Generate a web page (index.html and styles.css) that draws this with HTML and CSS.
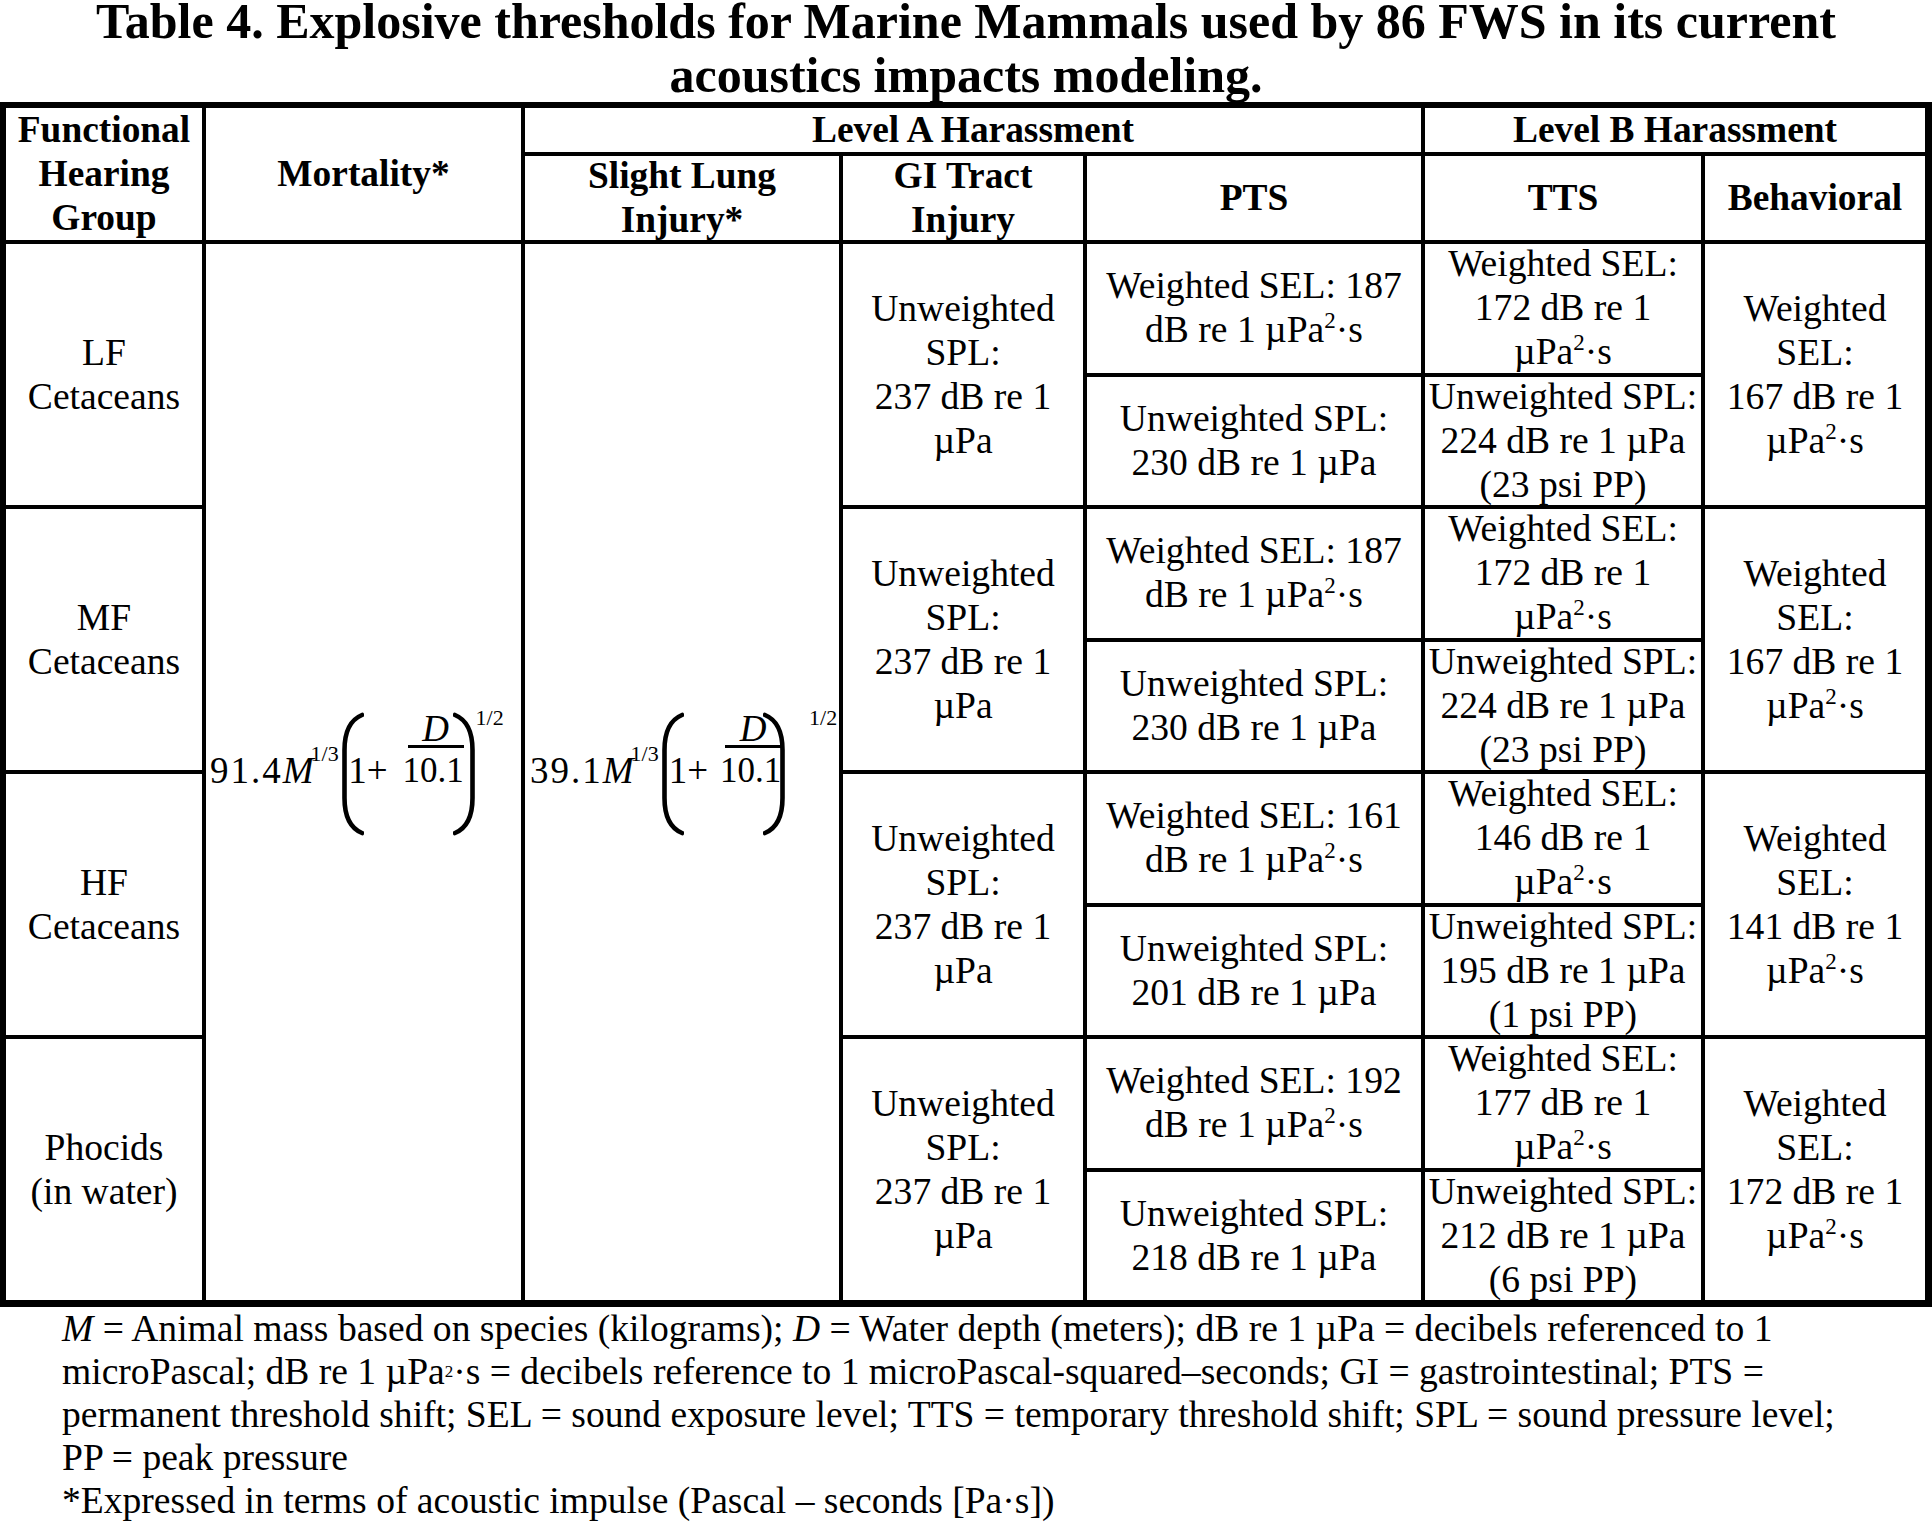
FILE: index.html
```html
<!DOCTYPE html>
<html lang="en">
<head>
<meta charset="utf-8">
<title>Table 4. Explosive thresholds for Marine Mammals</title>
<link rel="stylesheet" href="styles.css">
</head>
<body>
<div class="title">Table 4. Explosive thresholds for Marine Mammals used by 86 FWS in its current<br>acoustics impacts modeling.</div>

<div class="grid">
  <div class="cell hd r2"><div class="t">Functional<br>Hearing<br>Group</div></div>
  <div class="cell hd r2"><div class="t">Mortality*</div></div>
  <div class="cell hd c3"><div class="t">Level A Harassment</div></div>
  <div class="cell hd c2"><div class="t">Level B Harassment</div></div>

  <div class="cell hd"><div class="t">Slight Lung<br>Injury*</div></div>
  <div class="cell hd"><div class="t">GI Tract<br>Injury</div></div>
  <div class="cell hd"><div class="t">PTS</div></div>
  <div class="cell hd"><div class="t">TTS</div></div>
  <div class="cell hd"><div class="t">Behavioral</div></div>

  <!-- LF -->
  <div class="cell r2"><div class="t">LF<br>Cetaceans</div></div>
  <div class="cell r8 fcell fcell-a">
    <div class="formula">
      <span class="f-num">91.4</span><span class="f-var">M</span><span class="f-sup">1/3</span>
      <svg class="paren" viewBox="0 0 24 124"><path d="M22 3 C10 8 4.5 20 4.5 38 L4.5 86 C4.5 104 10 116 22 121"/></svg>
      <span class="f-one">1+</span>
      <span class="frac"><span class="frac-num">D</span><span class="frac-bar"></span><span class="frac-den">10.1</span></span>
      <svg class="paren rparen" viewBox="0 0 24 124"><path d="M2 3 C14 8 19.5 20 19.5 38 L19.5 86 C19.5 104 14 116 2 121"/></svg>
      <span class="f-sup2">1/2</span>
    </div>
  </div>
  <div class="cell r8 fcell fcell-b">
    <div class="formula">
      <span class="f-num">39.1</span><span class="f-var">M</span><span class="f-sup">1/3</span>
      <svg class="paren" viewBox="0 0 24 124"><path d="M22 3 C10 8 4.5 20 4.5 38 L4.5 86 C4.5 104 10 116 22 121"/></svg>
      <span class="f-one">1+</span>
      <span class="frac"><span class="frac-num">D</span><span class="frac-bar"></span><span class="frac-den">10.1</span></span>
      <svg class="paren rparen" viewBox="0 0 24 124"><path d="M2 3 C14 8 19.5 20 19.5 38 L19.5 86 C19.5 104 14 116 2 121"/></svg>
      <span class="f-sup2">1/2</span>
    </div>
  </div>
  <div class="cell r2"><div class="t">Unweighted<br>SPL:<br>237 dB re 1<br>µPa</div></div>
  <div class="cell"><div class="t">Weighted SEL: 187<br>dB re 1 µPa<span class="sup">2</span>·s</div></div>
  <div class="cell"><div class="t">Weighted SEL:<br>172 dB re 1<br>µPa<span class="sup">2</span>·s</div></div>
  <div class="cell r2"><div class="t">Weighted<br>SEL:<br>167 dB re 1<br>µPa<span class="sup">2</span>·s</div></div>
  <div class="cell"><div class="t">Unweighted SPL:<br>230 dB re 1 µPa</div></div>
  <div class="cell"><div class="t">Unweighted SPL:<br>224 dB re 1 µPa<br>(23 psi PP)</div></div>

  <!-- MF -->
  <div class="cell r2"><div class="t">MF<br>Cetaceans</div></div>
  <div class="cell r2"><div class="t">Unweighted<br>SPL:<br>237 dB re 1<br>µPa</div></div>
  <div class="cell"><div class="t">Weighted SEL: 187<br>dB re 1 µPa<span class="sup">2</span>·s</div></div>
  <div class="cell"><div class="t">Weighted SEL:<br>172 dB re 1<br>µPa<span class="sup">2</span>·s</div></div>
  <div class="cell r2"><div class="t">Weighted<br>SEL:<br>167 dB re 1<br>µPa<span class="sup">2</span>·s</div></div>
  <div class="cell"><div class="t">Unweighted SPL:<br>230 dB re 1 µPa</div></div>
  <div class="cell"><div class="t">Unweighted SPL:<br>224 dB re 1 µPa<br>(23 psi PP)</div></div>

  <!-- HF -->
  <div class="cell r2"><div class="t">HF<br>Cetaceans</div></div>
  <div class="cell r2"><div class="t">Unweighted<br>SPL:<br>237 dB re 1<br>µPa</div></div>
  <div class="cell"><div class="t">Weighted SEL: 161<br>dB re 1 µPa<span class="sup">2</span>·s</div></div>
  <div class="cell"><div class="t">Weighted SEL:<br>146 dB re 1<br>µPa<span class="sup">2</span>·s</div></div>
  <div class="cell r2"><div class="t">Weighted<br>SEL:<br>141 dB re 1<br>µPa<span class="sup">2</span>·s</div></div>
  <div class="cell"><div class="t">Unweighted SPL:<br>201 dB re 1 µPa</div></div>
  <div class="cell"><div class="t">Unweighted SPL:<br>195 dB re 1 µPa<br>(1 psi PP)</div></div>

  <!-- Phocids -->
  <div class="cell r2"><div class="t">Phocids<br>(in water)</div></div>
  <div class="cell r2"><div class="t">Unweighted<br>SPL:<br>237 dB re 1<br>µPa</div></div>
  <div class="cell"><div class="t">Weighted SEL: 192<br>dB re 1 µPa<span class="sup">2</span>·s</div></div>
  <div class="cell"><div class="t">Weighted SEL:<br>177 dB re 1<br>µPa<span class="sup">2</span>·s</div></div>
  <div class="cell r2"><div class="t">Weighted<br>SEL:<br>172 dB re 1<br>µPa<span class="sup">2</span>·s</div></div>
  <div class="cell"><div class="t">Unweighted SPL:<br>218 dB re 1 µPa</div></div>
  <div class="cell"><div class="t">Unweighted SPL:<br>212 dB re 1 µPa<br>(6 psi PP)</div></div>
</div>

<div class="legend">
  <div class="legend-line"><i>M</i> = Animal mass based on species (kilograms); <i>D</i> = Water depth (meters); dB re 1 µPa = decibels referenced to 1</div>
  <div class="legend-line">microPascal; dB re 1 µPa<span class="lsup">2</span>·s = decibels reference to 1 microPascal-squared–seconds; GI = gastrointestinal; PTS =</div>
  <div class="legend-line">permanent threshold shift; SEL = sound exposure level; TTS = temporary threshold shift; SPL = sound pressure level;</div>
  <div class="legend-line">PP = peak pressure</div>
  <div class="legend-line">*Expressed in terms of acoustic impulse (Pascal – seconds [Pa·s])</div>
</div>
</body>
</html>
```

FILE: styles.css
```css
html, body {
  margin: 0;
  padding: 0;
  background: #fff;
}
html {
  overflow: hidden;
}
body {
  width: 1932px;
  font-family: "Liberation Serif", "Times New Roman", serif;
  color: #000;
}

.title {
  margin: -6px 0 0;
  font-size: 50px;
  line-height: 54px;
  font-weight: bold;
  text-align: center;
}

.grid {
  display: grid;
  width: max-content;
  background: #000;
  padding: 6px 7px 7px 6px;
  gap: 4px;
  grid-template-columns: 196px 315px 314px 240px 334px 276px 220px;
  grid-template-rows: 44px 84px repeat(8, 128.5px);
}

.cell {
  background: #fff;
  display: flex;
  align-items: center;
  justify-content: center;
  text-align: center;
  font-size: 37.6px;
  line-height: 44px;
  white-space: nowrap;
  min-height: 0;
  min-width: 0;
}
.t {
  flex: none;
}
.hd { font-weight: bold; font-size: 37.4px; }
.r2 { grid-row: span 2; }
.r8 { grid-row: span 8; }
.c2 { grid-column: span 2; }
.c3 { grid-column: span 3; }

.sup {
  font-size: 23px;
  line-height: 0;
  vertical-align: 14px;
}

/* formula */
.fcell { justify-content: flex-start; }
.fcell-a { padding-left: 4px; }
.fcell-b { padding-left: 5px; }
.formula {
  display: flex;
  align-items: flex-start;
  height: 132px;
  line-height: 37px;
}
.f-num {
  margin-top: 46px;
  font-size: 37px;
  letter-spacing: 2px;
}
.f-var {
  margin-top: 46px;
  font-size: 37px;
  font-style: italic;
  margin-right: -3px;
}
.f-sup {
  margin-top: 37px;
  font-size: 22px;
  line-height: 22px;
}
.paren {
  width: 24px;
  height: 124px;
  margin-top: 6px;
  margin-left: 1.5px;
  flex: none;
}
.paren path {
  fill: none;
  stroke: #000;
  stroke-width: 4.6;
  stroke-linecap: round;
}
.f-one {
  margin-top: 46px;
  margin-left: -16px;
  font-size: 37px;
}
.frac {
  display: flex;
  flex-direction: column;
  align-items: flex-start;
  width: 61px;
  margin-left: 15px;
}
.frac-num {
  align-self: stretch;
  padding-left: 5px;
  margin-top: 4px;
  font-size: 37px;
  line-height: 37px;
  font-style: italic;
  text-align: center;
}
.frac-bar {
  width: 56px;
  height: 3px;
  margin-top: -2px;
  margin-left: 5px;
  background: #000;
}
.frac-den {
  margin-top: 4px;
  font-size: 35px;
  line-height: 37px;
}
.rparen {
  margin-left: -11px;
}
.fcell-b .f-one { margin-left: -15.5px; }
.fcell-b .frac { margin-left: 12px; }
.fcell-b .rparen { margin-left: -18px; }
.f-sup2 {
  margin-top: 1px;
  margin-left: -1px;
  font-size: 22px;
  line-height: 22px;
}
.fcell-b .f-sup2 { margin-left: 22px; }

/* legend */
.legend {
  padding-left: 62px;
  font-size: 37.6px;
  line-height: 43px;
}
.legend-line { white-space: nowrap; }
.lsup {
  font-size: 17px;
  line-height: 0;
  vertical-align: 7px;
}
```
